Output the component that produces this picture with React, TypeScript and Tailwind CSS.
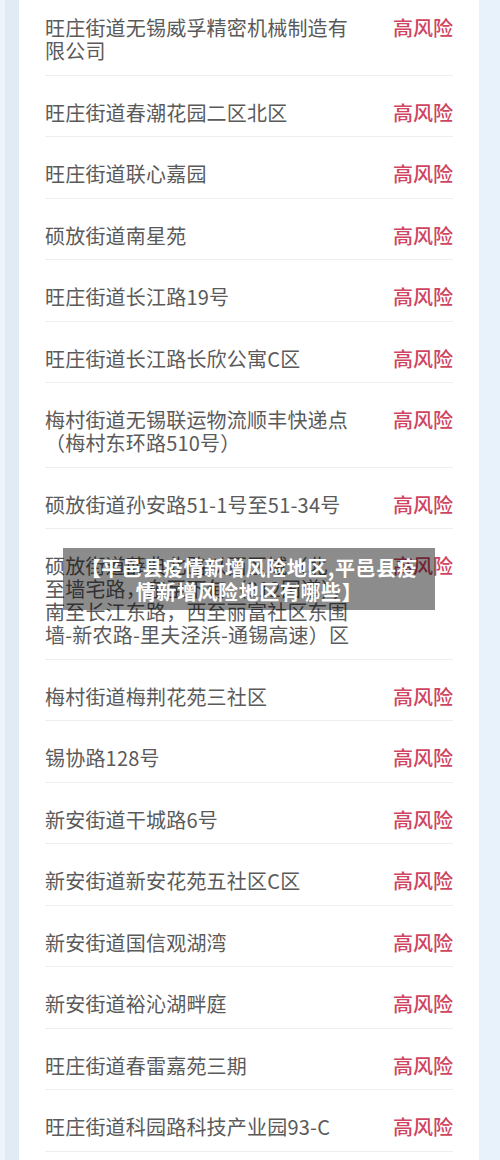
import React from "react";

interface Area {
    lines: string[];
}

const areas: Area[] = [
    { lines: ["旺庄街道无锡威孚精密机械制造有", "限公司"] },
    { lines: ["旺庄街道春潮花园二区北区"] },
    { lines: ["旺庄街道联心嘉园"] },
    { lines: ["硕放街道南星苑"] },
    { lines: ["旺庄街道长江路19号"] },
    { lines: ["旺庄街道长江路长欣公寓C区"] },
    { lines: ["梅村街道无锡联运物流顺丰快递点", "（梅村东环路510号）"] },
    { lines: ["硕放街道孙安路51-1号至51-34号"] },
    {
        lines: [
            "硕放街道薛典北路以西区域（北",
            "至墙宅路，东至下甸（312国道），",
            "南至长江东路，西至丽富社区东围",
            "墙-新农路-里夫泾浜-通锡高速）区",
        ],
    },
    { lines: ["梅村街道梅荆花苑三社区"] },
    { lines: ["锡协路128号"] },
    { lines: ["新安街道干城路6号"] },
    { lines: ["新安街道新安花苑五社区C区"] },
    { lines: ["新安街道国信观湖湾"] },
    { lines: ["新安街道裕沁湖畔庭"] },
    { lines: ["旺庄街道春雷嘉苑三期"] },
    { lines: ["旺庄街道科园路科技产业园93-C"] },
];

const Row = ({ area, first }: { area: Area; first: boolean }) => (
    <div
        className={`flex items-start justify-between border-b border-[#eeeeee] pb-[12.5px] ${
            first ? "pt-[16px]" : "pt-[25px]"
        }`}
    >
        <div className="tracking-[0.2px] text-[#5a5a5a]">
            {area.lines.map((l, i) => (
                <div key={i} className="whitespace-nowrap">
                    {l}
                </div>
            ))}
        </div>
        <div className="shrink-0 font-medium text-[#cf4561]">高风险</div>
    </div>
);

export default function App() {
    return (
        <div
            className="relative flex h-[1160px] w-[500px] overflow-hidden bg-[#e8f2fb] text-[20px] leading-[23px]"
            style={{ fontFamily: '"Noto Sans CJK SC", "Noto Sans", sans-serif' }}
        >
            {/* left edge */}
            <div className="flex w-[19px] shrink-0">
                <div className="w-[5px] bg-[#edf4fb]" />
                <div className="flex-1 bg-[#e0ebf6]" />
            </div>

            {/* list card */}
            <div className="w-[460px] shrink-0 bg-white px-[26px]">
                {areas.map((a, i) => (
                    <Row key={i} area={a} first={i === 0} />
                ))}
            </div>

            {/* title banner */}
            <div className="absolute left-[63px] top-[548px] w-[372px] bg-black/45 px-[6px] pt-[8px] pb-[6px] text-center text-[20px] font-bold leading-[24px] tracking-[0.6px] text-white">
                【平邑县疫情新增风险地区,平邑县疫
                <br />
                情新增风险地区有哪些】
            </div>
        </div>
    );
}
